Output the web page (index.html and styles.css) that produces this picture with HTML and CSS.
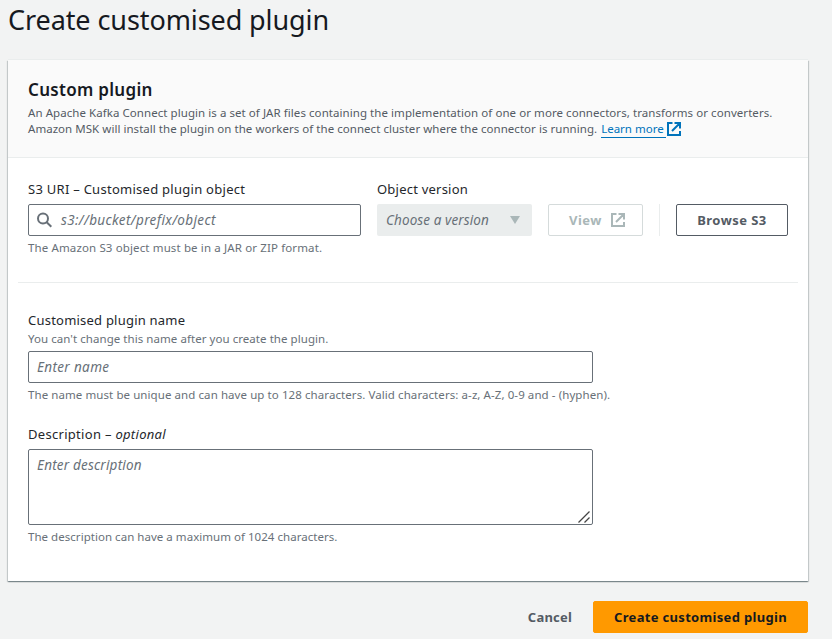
FILE: index.html
```html
<!DOCTYPE html>
<html lang="en-GB">
<head>
<meta charset="utf-8">
<title>Create customised plugin</title>
<link rel="stylesheet" href="styles.css">
</head>
<body>
<h1 class="page-title"><span class="t-title">Create customised plugin</span></h1>
<main class="card">
  <header class="card-header">
    <h2 class="card-title"><span class="t-heading">Custom plugin</span></h2>
    <p class="card-text"><span class="t-intro1">An Apache Kafka Connect plugin is a set of JAR files containing the implementation of one or more connectors, transforms or converters.</span><br><span class="t-intro2">Amazon MSK will install the plugin on the workers of the connect cluster where the connector is running.</span> <a class="link" href="#">Learn more</a><svg class="icon-external" viewBox="0 0 14 14"><path d="M5.5 1H1v12h12V9M7.5 1H13v5.5M13 1L5 9"/></svg></p>
  </header>
  <section class="object-row">
    <div class="field field-uri">
      <label class="label"><span class="t-uri">S3 URI – Customised plugin object</span></label>
      <div class="input">
        <svg class="icon-search" viewBox="0 0 16 16"><circle cx="6" cy="6.5" r="5"/><path d="M9.7 10.2L14.3 14.8"/></svg>
        <span class="placeholder t-bucket">s3://bucket/prefix/object</span>
      </div>
      <p class="hint"><span class="t-format">The Amazon S3 object must be in a JAR or ZIP format.</span></p>
    </div>
    <div class="field field-version">
      <label class="label"><span class="t-version">Object version</span></label>
      <div class="select"><span class="placeholder t-choose">Choose a version</span><svg class="icon-caret" viewBox="0 0 10 8"><path d="M0 0h10L5 8z"/></svg></div>
    </div>
    <button class="button button-view" disabled><span class="t-view">View</span><svg class="icon-external" viewBox="0 0 14 14"><path d="M5.5 1H1v12h12V9M7.5 1H13v5.5M13 1L5 9"/></svg></button>
    <div class="divider"></div>
    <button class="button button-browse"><span class="t-browse">Browse S3</span></button>
  </section>
  <hr class="separator">
  <section class="details">
    <div class="field">
      <label class="label"><span class="t-name">Customised plugin name</span></label>
      <p class="description"><span class="t-cant">You can't change this name after you create the plugin.</span></p>
      <div class="input"><span class="placeholder t-entername">Enter name</span></div>
      <p class="hint"><span class="t-unique">The name must be unique and can have up to 128 characters. Valid characters: a-z, A-Z, 0-9 and - (hyphen).</span></p>
    </div>
    <div class="field field-description">
      <label class="label"><span class="t-desc">Description – <i>optional</i></span></label>
      <div class="input textarea"><span class="placeholder t-enterdesc">Enter description</span><svg class="grip" viewBox="0 0 12 12"><path d="M0.5 11.5L11.5 0.5M6.5 11.5L11.5 6.5"/></svg></div>
      <p class="hint"><span class="t-max">The description can have a maximum of 1024 characters.</span></p>
    </div>
  </section>
</main>
<footer class="actions">
  <button class="button button-cancel"><span class="t-cancel">Cancel</span></button>
  <button class="button button-primary"><span class="t-create">Create customised plugin</span></button>
</footer>
</body>
</html>
```
FILE: styles.css
```css
* { box-sizing: border-box; }
body {
  margin: 0;
  padding: 0 24px 0 8px;
  height: 639px;
  overflow: hidden;
  background: #f2f3f3;
  color: #16191f;
  font: 13px/22px "Noto Sans", "Open Sans", sans-serif;
}
h1, h2, p { margin: 0; font-weight: 400; }
span, a { white-space: nowrap; }
.page-title { height: 60px; font-size: 27px; line-height: 40px; }
.card {
  height: 521px;
  background: #fff;
  box-shadow: 0 1px 1px 0 rgba(0,28,36,.3), 1px 1px 1px 0 rgba(0,28,36,.15), -1px 1px 1px 0 rgba(0,28,36,.15), 0 -1px 0 0 #eaeded;
}
.card-header { height: 98px; padding: 19px 20px 0; background: #fafafa; border-bottom: 1px solid #eaeded; }
.card-title { font-size: 17px; font-weight: 600; line-height: 22px; padding-bottom: 4px; }
.card-text { font-size: 11.5px; line-height: 16px; color: #545b64; }
.link { display: inline-block; height: 17px; width: 65px; margin-left: 1px; margin-right: 1px; color: #0073bb; border-bottom: 1px solid #0073bb; text-decoration: none; vertical-align: top; }
.icon-external { width: 14px; height: 14px; fill: none; stroke: currentColor; stroke-width: 2; }
.link + .icon-external { margin-top: 1px; color: #0073bb; vertical-align: top; }
.object-row { display: flex; padding: 20px 20px 0; height: 124px; }
.field-uri { width: 333px; margin-right: 16px; }
.field-version { width: 155px; margin-right: 16px; }
.label { display: block; height: 26px; color: #24272c; }
.input { display: flex; align-items: center; height: 32px; border: 1px solid #687078; border-radius: 2px; padding: 0 8px; background: #fff; }
.placeholder { font-size: 13.5px; font-style: italic; color: #687078; }
.icon-search { width: 16px; height: 16px; margin-right: 8px; fill: none; stroke: #687078; stroke-width: 2; }
.hint { margin-top: 4px; font-size: 11.5px; line-height: 16px; color: #687078; }
.description { height: 20px; margin-top: -4px; font-size: 11.5px; line-height: 16px; color: #687078; }
.select { display: flex; align-items: center; justify-content: space-between; height: 32px; padding: 0 12px 0 9px; background: #eaeded; border-radius: 2px; }
.icon-caret { width: 10px; height: 8px; fill: #aab7b8; }
.button { display: flex; align-items: center; justify-content: center; height: 32px; padding: 0; border: 1px solid #545b64; border-radius: 2px; background: #fff; color: #545b64; font: 700 13px/22px "Noto Sans", "Open Sans", sans-serif; }
.object-row > .button, .divider { margin-top: 26px; }
.button-view { width: 95px; justify-content: space-between; padding: 0 17px 0 20px; border-color: #d5dbdb; color: #aab7b8; }
.divider { width: 1px; height: 32px; margin-left: 16px; margin-right: 16px; background: #eaeded; }
.button-browse { width: 112px; }
.separator { margin: 0 10px; border: 0; height: 1px; background: #eaeded; }
.details { width: 605px; padding: 26px 20px 0; }
.field-description { margin-top: 20px; }
.textarea { position: relative; height: 76px; align-items: flex-start; padding-top: 4px; }
.grip { position: absolute; right: 2px; bottom: 1px; width: 12px; height: 12px; fill: none; stroke: #444; stroke-width: 1.3; }
.actions { display: flex; justify-content: flex-end; margin-top: 20px; }
.button-cancel { width: 86px; border-color: transparent; background: transparent; }
.button-primary { width: 215px; border-color: #ff9900; background: #ff9900; color: #16191f; }

/* Per-string tracking */
.t-title { letter-spacing: -.09px; }
.t-heading { letter-spacing: .3px; }
.t-intro1 { letter-spacing: .06px; }
.t-intro2 { letter-spacing: .04px; }
.t-uri { letter-spacing: .27px; }
.t-bucket { letter-spacing: .37px; }
.t-format { letter-spacing: .13px; }
.t-version { letter-spacing: .22px; }
.t-choose { letter-spacing: .1px; }
.t-view { letter-spacing: .5px; }
.t-browse { letter-spacing: .45px; }
.t-name { letter-spacing: .22px; }
.t-cant { letter-spacing: .055px; }
.t-entername { letter-spacing: .35px; }
.t-unique { letter-spacing: .08px; }
.t-desc { letter-spacing: .3px; }
.t-enterdesc { letter-spacing: .2px; }
.t-max { letter-spacing: .035px; }
.t-cancel { letter-spacing: .25px; }
.t-create { letter-spacing: .32px; }
```
